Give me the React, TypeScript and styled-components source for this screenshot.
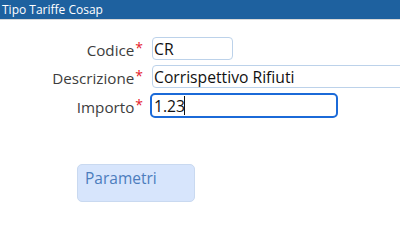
import React from "react";
import styled, { createGlobalStyle } from "styled-components";

const Global = createGlobalStyle`
  html, body { margin: 0; padding: 0; background: #fff; }
  body { font-family: "Open Sans", "Noto Sans", sans-serif; width: 400px; height: 248px; overflow: hidden; }
`;

const TitleBar = styled.div`
  height: 19px;
  background: #1e619f;
  color: #fff;
  font-size: 12px;
  line-height: 19px;
  padding-left: 2px;
  border-bottom: 1px solid #d9d9d9;
  white-space: nowrap;
`;

const Form = styled.div`
  display: grid;
  grid-template-columns: 143px 1fr;
  column-gap: 9px;
  row-gap: 5px;
  padding-top: 17px;
  align-items: center;
  overflow: hidden;
`;

const Label = styled.label`
  justify-self: end;
  font-size: 15.2px;
  color: #3d3d3d;
  white-space: nowrap;
  line-height: 20px;
`;

const Star = styled.span`
  color: #e5202a;
  font-size: 14px;
  vertical-align: 3px;
  margin-left: 1px;
`;

const Field = styled.div`
  position: relative;
  display: flex;
  align-items: center;
`;

const Input = styled.input<{ $w: number; $focus?: boolean }>`
  box-sizing: border-box;
  width: ${(p) => p.$w}px;
  height: ${(p) => (p.$focus ? 25 : 23)}px;
  margin-left: ${(p) => (p.$focus ? -2 : 0)}px;
  font-family: "Open Sans", "Noto Sans", sans-serif;
  font-size: 15.7px;
  color: #111;
  padding: 0 0 0 ${(p) => (p.$focus ? 2 : 1)}px;
  border: ${(p) => (p.$focus ? "2px solid #1b6ad8" : "1px solid #bcd2ea")};
  border-radius: ${(p) => (p.$focus ? 5 : 4)}px;
  outline: none;
  background: #fff;
`;

const Caret = styled.span`
  position: absolute;
  left: 32px;
  top: 3px;
  width: 1px;
  height: 19px;
  background: #111;
`;

const Section = styled.div`
  margin: 46px 0 0 77px;
  width: 118px;
  height: 38px;
  box-sizing: border-box;
  background: #d7e5fc;
  border: 1px solid #c9d9f0;
  border-radius: 5px;
  color: #4c7dbd;
  font-size: 15.5px;
  padding: 3px 0 0 7px;
  line-height: 20px;
`;

export default function App() {
  return (
    <>
      <Global />
      <TitleBar>Tipo Tariffe Cosap</TitleBar>
      <Form>
        <Label>
          Codice<Star>*</Star>
        </Label>
        <Field>
          <Input $w={81} defaultValue="CR" readOnly />
        </Field>
        <Label>
          Descrizione<Star>*</Star>
        </Label>
        <Field>
          <Input $w={320} defaultValue="Corrispettivo Rifiuti" readOnly />
        </Field>
        <Label>
          Importo<Star>*</Star>
        </Label>
        <Field>
          <Input $w={188} $focus defaultValue="1.23" readOnly />
          <Caret />
        </Field>
      </Form>
      <Section>Parametri</Section>
    </>
  );
}
